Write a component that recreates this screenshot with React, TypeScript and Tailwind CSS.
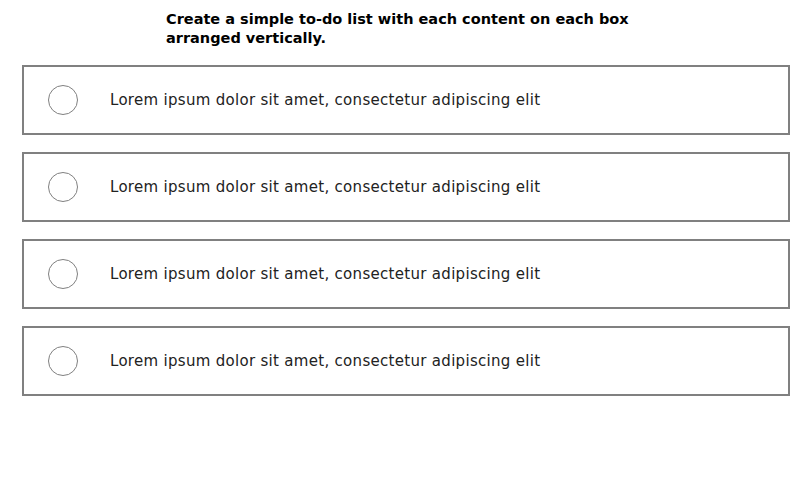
const items = [
  'Lorem ipsum dolor sit amet, consectetur adipiscing elit',
  'Lorem ipsum dolor sit amet, consectetur adipiscing elit',
  'Lorem ipsum dolor sit amet, consectetur adipiscing elit',
  'Lorem ipsum dolor sit amet, consectetur adipiscing elit',
]

export default function App() {
  return (
    <div className="min-h-[491px] bg-white pt-[10px] font-['DejaVu_Sans',sans-serif] text-black">
      <h1 className="ml-[166px] w-[480px] text-[14.5px] font-semibold leading-[19px]">
        Create a simple to-do list with each content on each box arranged vertically.
      </h1>
      <ul className="mt-[17px] flex flex-col gap-[17px] pl-[22px] pr-[15px]">
        {items.map((t, i) => (
          <li
            key={i}
            className="flex h-[70px] items-center border-2 border-[#808080] bg-white"
          >
            <span className="ml-[24px] h-[30px] w-[30px] shrink-0 rounded-full border border-[#808080]" />
            <span className="ml-[32px] text-[15px] tracking-[0.3px] text-[#222]">{t}</span>
          </li>
        ))}
      </ul>
    </div>
  )
}
